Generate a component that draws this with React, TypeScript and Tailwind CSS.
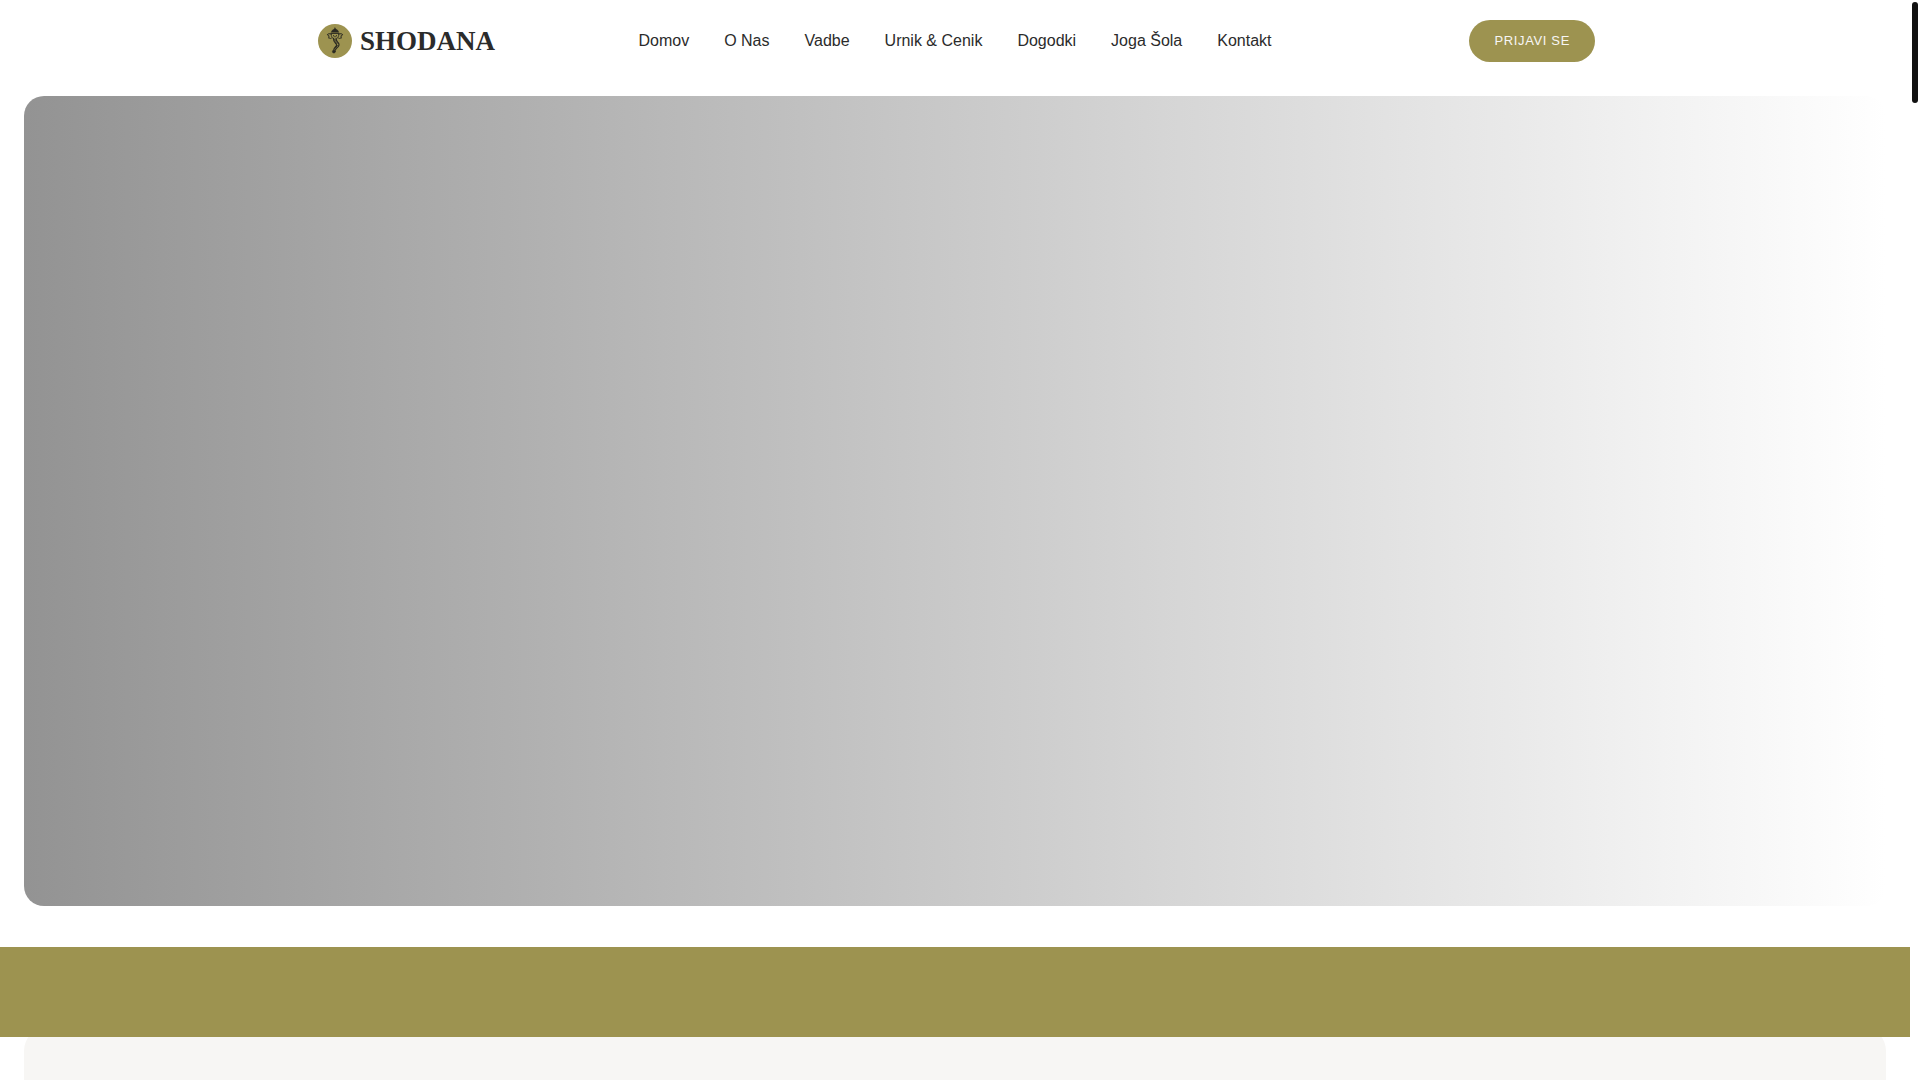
const links = ["Domov", "O Nas", "Vadbe", "Urnik & Cenik", "Dogodki", "Joga Šola", "Kontakt"];

function Emblem() {
  return (
    <svg viewBox="0 0 34 34" className="size-[34px]" aria-hidden="true">
      <circle cx="17" cy="17" r="17" fill="#9d9350" />
      <g fill="none" stroke="#2b2a22" strokeLinecap="round" strokeLinejoin="round">
        <path d="M17 3.8l.8 1.3 1.7.9 1.4 2.3h-7.8l1.4-2.3 1.7-.9Z" fill="#2b2a22" strokeWidth=".4" />
        <path d="M12.9 9.4h8.2" strokeWidth="1" />
        <path d="M13.2 10.2c-1.6-1-3.5-.5-4 .6 2 0 1.9 1.600 1.600 3.2M20.800 10.200c1.600-1 3.500-.5 4 .6-2 0-1.900 1.600-1.600 3.200" strokeWidth="1" />
        <path d="M13.2 10.200c.1 1.900.5 3.300 1.800 4.300M20.800 10.200c-.1 1.900-.5 3.300-1.800 4.300M11.200 14c.8.700 1.500.700 2.200.2M22.800 14c-.8.700-1.500.700-2.200.2" strokeWidth=".9" />
        <path d="M15.500 11.300l.8 1.500M18.500 11.300l-.8 1.500" strokeWidth=".9" />
        <path d="M15.500 14.300c-.1 2.700.4 3.800 2 5 1.300 1 1.400 2 .4 3.200-.9 1.100-2 1.700-2 3.300" strokeWidth="1.200" />
        <path d="M18.100 14.300c-.1 1.700.3 2.700 1.600 3.900 1.700 1.500 1.700 3.200.3 4.700-1.100 1.100-2.100 1.600-2.600 3.200" strokeWidth="1.200" />
        <path d="M16.900 15.300l.2 2.300 1.800 1.900M19.300 21.600l-1.800 2.300" strokeWidth="1" />
        <circle cx="15.900" cy="27.600" r="1.500" fill="#2b2a22" strokeWidth=".5" />
      </g>
    </svg>
  );
}

export default function App() {
  return (
    <div className="flex h-screen overflow-hidden bg-white font-['Liberation_Sans',Arial,sans-serif] text-[#2b2b2b]">
      <div className="min-w-0 flex-1 overflow-hidden">
        <header className="mx-auto grid h-[82px] max-w-[1280px] grid-cols-[1fr_auto_1fr] items-center">
          <a href="#" className="ml-[3px] flex items-center gap-2 justify-self-start">
            <Emblem />
            <span className="font-['Liberation_Serif',serif] text-[27px] leading-[34px] font-bold">SHODANA</span>
          </a>
          <nav className="flex gap-[35px] text-base">
            {links.map((label) => (
              <a key={label} href="#" className="whitespace-nowrap">{label}</a>
            ))}
          </nav>
          <button type="button" className="h-[42px] justify-self-end rounded-full bg-[#9d9350] px-[25px] text-[13px] tracking-wider text-[#f7f6f4]">
            PRIJAVI SE
          </button>
        </header>
        <main>
          <section className="mx-6 mt-[14px] h-[75vh] rounded-[20px] bg-linear-to-r/srgb from-[#939393] to-white" />
          <section className="relative mt-[41px] h-[90px] bg-[#9d9350]" />
          <section className="mx-6 -mt-[10px] h-[500px] rounded-[24px] bg-[#f7f6f4]" />
        </main>
      </div>
      <div className="w-[10px] shrink-0 px-[2px] py-[2px]" aria-hidden="true">
        <div className="h-[101px] rounded-full bg-[#111111]" />
      </div>
    </div>
  );
}
